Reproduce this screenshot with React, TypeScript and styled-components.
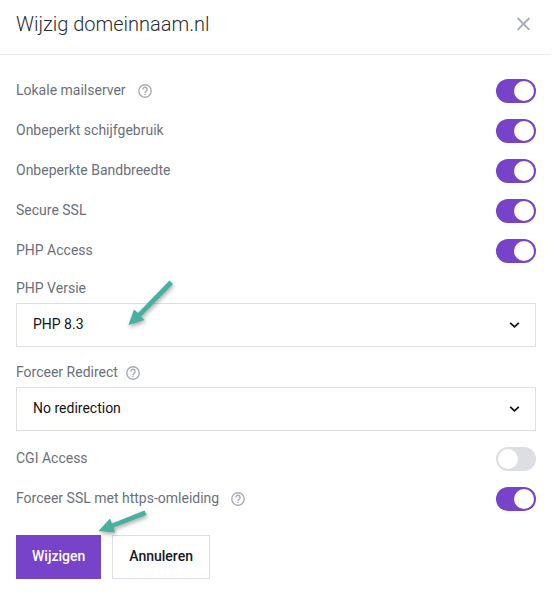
import React, { useState } from 'react';
import styled, { createGlobalStyle } from 'styled-components';

const GlobalStyle = createGlobalStyle`
  *, *::before, *::after { box-sizing: border-box; }
  body {
    margin: 0;
    background: #ffffff;
    font-family: Roboto, "Liberation Sans", sans-serif;
    font-size: 14px;
    line-height: 20px;
    color: #6b6f7b;
  }
`;

const Dialog = styled.section`
  margin-right: 7px;
  background: #ffffff;
`;

const Header = styled.header`
  display: flex;
  align-items: center;
  justify-content: space-between;
  padding: 8px 20px 14px 16px;
  border-bottom: 1px solid #ebebee;
`;

const Title = styled.h1`
  margin: 0;
  font-size: 20px;
  font-weight: 300;
  line-height: 32px;
  color: #2b2c31;
`;

const CloseButton = styled.button`
  display: flex;
  padding: 0;
  border: 0;
  background: none;
  color: #a9acb9;
  cursor: pointer;
`;

const Form = styled.form`
  display: flex;
  flex-direction: column;
  gap: 16px;
  padding: 24px 15px 16px 16px;
`;

const SwitchRow = styled.div`
  display: flex;
  align-items: flex-start;
  justify-content: space-between;
`;

const Caption = styled.div<{ $gap: number }>`
  display: flex;
  align-items: center;
  gap: ${(p) => p.$gap}px;
  height: 22px;
`;

const HelpButton = styled.button`
  display: flex;
  padding: 2px 0 0;
  border: 0;
  background: none;
  color: #a9acb9;
  cursor: help;
`;

const Switch = styled.input`
  appearance: none;
  display: flex;
  flex: none;
  width: 40px;
  height: 24px;
  margin: 0;
  padding: 2px;
  border-radius: 12px;
  background: #dddee3;
  cursor: pointer;

  &::before {
    content: "";
    width: 20px;
    height: 20px;
    border-radius: 50%;
    background: #ffffff;
  }

  &:checked {
    justify-content: flex-end;
    background: #7743c8;
  }
`;

const Field = styled.div`
  display: flex;
  flex-direction: column;
  gap: 6px;
`;

const FieldCaption = styled(Caption)`
  height: 18px;
`;

const SelectBox = styled.div`
  display: grid;
  align-items: center;
  position: relative;
`;

const Select = styled.select`
  appearance: none;
  width: 100%;
  height: 44px;
  padding: 0 40px 2px 16px;
  border: 1px solid #dddee3;
  border-radius: 0;
  background: #ffffff;
  color: #121317;
  font: inherit;
  cursor: pointer;
`;

const Chevron = styled.svg`
  position: absolute;
  right: 16px;
  pointer-events: none;
`;

const Actions = styled.div`
  display: flex;
  gap: 11px;
  margin-top: 8px;
`;

const Button = styled.button<{ $primary?: boolean }>`
  height: 44px;
  padding: 0 16px 2px;
  border: ${(p) => (p.$primary ? '0' : '1px solid #dddee3')};
  background: ${(p) => (p.$primary ? '#7743c8' : '#ffffff')};
  color: ${(p) => (p.$primary ? '#ffffff' : '#17181c')};
  font: inherit;
  font-weight: 500;
  cursor: pointer;
`;

const PointerArrow = styled.svg<{ $left: number; $top: number }>`
  position: absolute;
  left: ${(p) => p.$left}px;
  top: ${(p) => p.$top}px;
  overflow: visible;
  pointer-events: none;
  filter: drop-shadow(1px 2px 2px rgba(0, 0, 0, 0.35));
`;

const ActionsAnchor = styled.div`
  position: relative;
`;

function Help({ topic }: { topic: string }) {
  return (
    <HelpButton type="button" aria-label={`Uitleg: ${topic}`}>
      <svg width="14" height="14" viewBox="0 0 14 14" fill="none" stroke="currentColor" strokeWidth="1.4">
        <circle cx="7" cy="7" r="6.2" />
        <path d="M4.9 5.5a2.1 2.1 0 1 1 3.5 1.5C7.5 7.7 7 8 7 8.9" />
        <path d="M7 9.7v1.4" />
      </svg>
    </HelpButton>
  );
}

function SwitchField({ id, label, help, on = true }: { id: string; label: string; help?: boolean; on?: boolean }) {
  const [checked, setChecked] = useState(on);
  return (
    <SwitchRow>
      <Caption $gap={12}>
        <label htmlFor={id}>{label}</label>
        {help && <Help topic={label} />}
      </Caption>
      <Switch id={id} type="checkbox" role="switch" checked={checked} onChange={(e) => setChecked(e.target.checked)} />
    </SwitchRow>
  );
}

function SelectField({ id, label, options, help, children }: {
  id: string; label: string; options: string[]; help?: boolean; children?: React.ReactNode;
}) {
  return (
    <Field>
      <FieldCaption $gap={8}>
        <label htmlFor={id}>{label}</label>
        {help && <Help topic={label} />}
      </FieldCaption>
      <SelectBox>
        <Select id={id}>
          {options.map((o) => <option key={o}>{o}</option>)}
        </Select>
        <Chevron width="11" height="8" viewBox="0 0 11 8" fill="none" stroke="#121317" strokeWidth="1.8">
          <path d="M1.2 1.8 5.5 5.8 9.8 1.8" />
        </Chevron>
        {children}
      </SelectBox>
    </Field>
  );
}

export default function App() {
  return (
    <>
      <GlobalStyle />
      <Dialog role="dialog" aria-labelledby="dialog-title">
        <Header>
          <Title id="dialog-title">Wijzig domeinnaam.nl</Title>
          <CloseButton type="button" aria-label="Sluiten">
            <svg width="16" height="16" viewBox="0 0 16 16" fill="none" stroke="currentColor" strokeWidth="1.9">
              <path d="M2.6 2 14.4 13.8M14.4 2 2.6 13.8" />
            </svg>
          </CloseButton>
        </Header>
        <Form onSubmit={(e) => e.preventDefault()}>
          <SwitchField id="mail" label="Lokale mailserver" help />
          <SwitchField id="disk" label="Onbeperkt schijfgebruik" />
          <SwitchField id="bandwidth" label="Onbeperkte Bandbreedte" />
          <SwitchField id="ssl" label="Secure SSL" />
          <SwitchField id="php" label="PHP Access" />
          <SelectField id="php-version" label="PHP Versie" options={['PHP 8.3', 'PHP 8.2', 'PHP 8.1']}>
            <PointerArrow $left={112} $top={-23} width="46" height="46" viewBox="0 0 46 46" fill="#48b09f" aria-hidden="true">
              <path d="M0.5 45 6 29.5 10 33 41.5 0.5 45 4 13 36.5 16.5 40Z" />
            </PointerArrow>
          </SelectField>
          <SelectField id="redirect" label="Forceer Redirect" options={['No redirection', 'www', 'non-www']} help />
          <SwitchField id="cgi" label="CGI Access" on={false} />
          <SwitchField id="force-ssl" label="Forceer SSL met https-omleiding" help />
          <ActionsAnchor>
            <Actions>
              <Button type="submit" $primary>Wijzigen</Button>
              <Button type="button">Annuleren</Button>
            </Actions>
            <PointerArrow $left={82} $top={-17} width="50" height="24" viewBox="0 0 50 24" fill="#48b09f" aria-hidden="true">
              <path d="M0.5 21 12 8.5 14 13.5 46.5 0.5 48.5 5 15.5 17.5 17 22.5Z" />
            </PointerArrow>
          </ActionsAnchor>
        </Form>
      </Dialog>
    </>
  );
}
